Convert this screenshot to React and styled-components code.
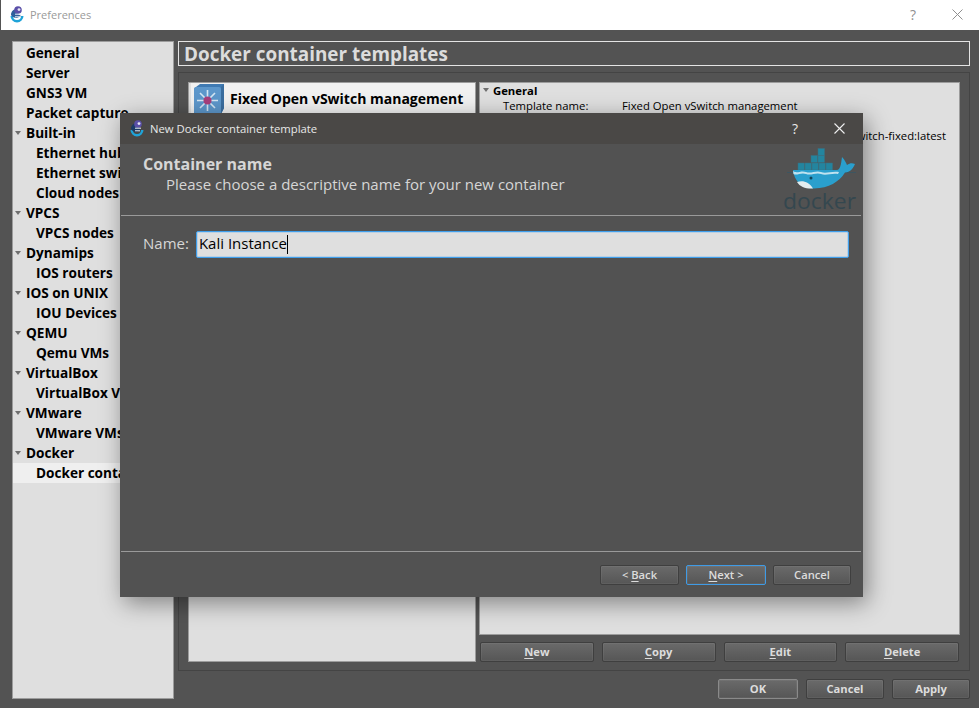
import React from 'react';
import styled, {createGlobalStyle} from 'styled-components';

const font = `"Open Sans", "Noto Sans", sans-serif`;

const Global = createGlobalStyle`
  html, body { margin: 0; padding: 0; background: #535353; }
  body { font-family: ${font}; overflow: hidden; }
  * { box-sizing: border-box; }
`;

const Window = styled.div`
  position: relative;
  width: 979px;
  height: 708px;
  background: #535353;
  display: flex;
  flex-flow: column;
  overflow: hidden;
`;

const TitleBar = styled.div`
  height: 30px;
  background: #fff;
  border-left: 1px solid #535353;
  display: flex;
  align-items: center;
  padding: 0 16px 2px 8px;
  color: #9a9a9a;
  font-size: 11px;
  gap: 5px;
`;

const TitleText = styled.span`
  flex: 1;
`;

const HelpMark = styled.span`
  color: ${p => p.$light ? '#e8e8e8' : '#8f8f8f'};
  font-size: 14px;
  width: 10px;
  text-align: center;
  margin-right: 29px;
`;

const Body = styled.div`
  flex: 1;
  display: flex;
  gap: 4px;
  padding: 11px 9px 9px 12px;
  min-height: 0;
`;

const Sidebar = styled.div`
  width: 162px;
  background: #dfdfdf;
  border: 1px solid #9c9c9c;
  padding-top: 1px;
  display: flex;
  flex-flow: column;
`;

const TreeRow = styled.div`
  height: 20px;
  line-height: 19px;
  font-size: 13.6px;
  font-weight: 700;
  color: #000;
  white-space: nowrap;
  overflow: hidden;
  padding-left: ${p => p.$sub ? 23 : 13}px;
  background: ${p => p.$selected ? '#efefef' : 'transparent'};
  position: relative;
`;

const Arrow = styled.i`
  position: absolute;
  left: ${p => p.$left || 2}px;
  top: ${p => p.$top || 8}px;
  width: 0;
  height: 0;
  border-left: 3.5px solid transparent;
  border-right: 3.5px solid transparent;
  border-top: 4px solid #6f6f6f;
`;

const Main = styled.div`
  flex: 1;
  display: flex;
  flex-flow: column;
  min-width: 0;
`;

const Heading = styled.div`
  height: 25px;
  border: 1px solid #e4e4e4;
  color: #dcdcdc;
  font-size: 18.9px;
  font-weight: 700;
  line-height: 25px;
  padding-left: 5px;
  white-space: nowrap;
`;

const Group = styled.div`
  margin-top: 6px;
  height: 599px;
  border: 1px solid #444;
  padding: 9px 9px 8px 9px;
  display: flex;
  gap: 3px;
`;

const TemplateList = styled.div`
  width: 288px;
  background: #dfdfdf;
  border: 1px solid #9c9c9c;
  padding: 0 0 0 2px;
`;

const TemplateRow = styled.div`
  height: 31px;
  background: #f1f1f1;
  display: flex;
  align-items: center;
  gap: 5px;
  padding-left: 2px;
  font-size: 14px;
  font-weight: 700;
  color: #000;
  white-space: nowrap;
`;

const RightColumn = styled.div`
  flex: 1;
  display: flex;
  flex-flow: column;
  gap: 7px;
`;

const InfoPanel = styled.div`
  height: 553px;
  background: #dfdfdf;
  border: 1px solid #9c9c9c;
  padding: 0 13px 0 4px;
  font-size: 11.3px;
  color: #000;
  position: relative;
`;

const InfoHead = styled.div`
  height: 15px;
  line-height: 15px;
  font-weight: 700;
  padding-left: 9px;
  position: relative;
`;

const InfoRow = styled.div`
  height: 15px;
  line-height: 15px;
  padding-left: 19px;
  display: grid;
  grid-template-columns: 119px 1fr;
  white-space: nowrap;
`;

const InfoValue = styled.span`
  justify-self: ${p => p.$end ? 'end' : 'start'};
`;

const ActionRow = styled.div`
  display: flex;
  gap: 8px;
  padding: 0 1px;
`;

const Button = styled.div`
  height: 20px;
  flex: ${p => p.$grow ? 1 : 'none'};
  width: ${p => p.$w ? p.$w + 'px' : 'auto'};
  border: 1px solid ${p => p.$focus ? '#3f9be6' : p.$default ? '#8a8a8a' : '#3f3f3f'};
  border-radius: 2px;
  background: linear-gradient(#6a6a6a, #565656);
  color: #dcdcdc;
  font-size: 11.2px;
  font-weight: ${p => p.$thin ? 600 : 700};
  line-height: 18px;
  text-align: center;
  box-shadow: inset 0 0 0 1px rgba(255,255,255,0.05);
  white-space: nowrap;

  u {
    text-underline-offset: 2px;
  }
`;

const BottomRow = styled.div`
  margin-top: 8px;
  display: flex;
  justify-content: flex-end;
  gap: 8px;
`;

const Dialog = styled.div`
  position: absolute;
  left: 120px;
  top: 113px;
  width: 743px;
  height: 484px;
  background: #525252;
  box-shadow: 4px 6px 22px rgba(0,0,0,0.42);
  display: flex;
  flex-flow: column;
`;

const DialogBar = styled.div`
  height: 31px;
  background: #4a4846;
  display: flex;
  align-items: center;
  gap: 5px;
  padding: 0 18px 1px 9px;
  color: #e8e8e8;
  font-size: 11.3px;
`;

const DialogHeader = styled.div`
  height: 72px;
  border-bottom: 1px solid #9a9a9a;
  margin: 0 2px 0 1px;
  padding: 10px 4px 0 22px;
  display: flex;
  justify-content: space-between;
  align-items: flex-start;
`;

const HeaderTitle = styled.div`
  font-size: 16px;
  line-height: 20px;
  font-weight: 700;
  color: #d6d6d6;
  white-space: nowrap;
`;

const HeaderSub = styled.div`
  font-size: 15px;
  line-height: 20px;
  color: #d6d6d6;
  padding-left: 23px;
  white-space: nowrap;
`;

const LogoBox = styled.div`
  margin-top: -6px;
  line-height: 0;
`;

const DialogContent = styled.div`
  flex: 1;
  padding: 15px 14px 0 23px;
  display: flex;
  align-items: flex-start;
  gap: 7px;
`;

const NameLabel = styled.label`
  font-size: 15px;
  line-height: 25px;
  color: #d6d6d6;
`;

const NameInput = styled.div`
  flex: 1;
  height: 27px;
  background: #dfdfdf;
  border: 1px solid #3f9fec;
  border-radius: 2px;
  box-shadow: inset 0 0 0 1px rgba(74,163,238,0.25);
  font-size: 15px;
  line-height: 23px;
  color: #000;
  padding-left: 2px;
  display: flex;
`;

const Caret = styled.span`
  width: 1px;
  height: 19px;
  margin: 3px 0 0 0;
  background: #000;
`;

const DialogFooter = styled.div`
  height: 46px;
  border-top: 1px solid #9a9a9a;
  margin: 0 2px 0 1px;
  padding: 13px 10px 0 0;
  display: flex;
  justify-content: flex-end;
  gap: 7px;
`;

// gns3 swirl, both the window and the dialog use it
const GnsIcon = ({dark}) => (
  <svg width="16" height="18" viewBox="0 0 16 18">
    <path d="M1.5 11 a6.5 6.5 0 0 0 13 0 L12 11 a4 4 0 0 1 -8 0z" fill="#1fa3d8" />
    <path d="M2 10 C2 6 5 4 8 4 L12 7 L9 9 L12 11 L8 13 C5 13 3 12 2 10z" fill={dark ? '#1b3a66' : '#2f5f9c'} />
    <circle cx="9" cy="5" r="3.8" fill="#5a4fa8" />
    <circle cx="10" cy="4.6" r="1.4" fill="#e8e8f4" />
    <path d="M6 9.2h6M6 11.8h5" stroke="#e6eef6" strokeWidth="1" />
  </svg>
);

const SwitchIcon = () => (
  <svg width="32" height="31" viewBox="0 0 32 31">
    <path d="M3 4 L7 1 H31 V25 L28 31 H1 V6z" fill="#3f7ab3" />
    <rect x="1" y="4" width="27" height="27" rx="2" fill="#5d97cb" />
    <path d="M28 4 L31 1 V25 L28 31z" fill="#3a6d9f" />
    <g stroke="#d5e6f3" strokeWidth="1.6">
      <path d="M14.5 17.5 L4 17.5M14.5 17.5 L25 17.5M14.5 17.5 L14.5 7M14.5 17.5 L14.5 28M14.5 17.5 L7 10M14.5 17.5 L22 10M14.5 17.5 L7 25M14.5 17.5 L22 25" />
    </g>
    <circle cx="14.5" cy="17.5" r="4" fill="#a83f7c" />
  </svg>
);

const DockerLogo = () => (
  <svg width="74" height="68" viewBox="0 0 74 68">
    <g fill="#23859f" stroke="#3a6f80" strokeWidth="0.5">
      <rect x="35" y="0.5" width="6.5" height="7" />
      <rect x="28" y="7.5" width="6.5" height="7" />
      <rect x="35" y="7.5" width="6.5" height="7" />
      <rect x="15" y="15" width="6.5" height="7" />
      <rect x="22" y="15" width="6.5" height="7" />
      <rect x="29" y="15" width="6.5" height="7" />
      <rect x="36" y="15" width="6.5" height="7" />
      <rect x="43" y="15" width="6.5" height="7" />
    </g>
    <path d="M4 24.5 H73" stroke="#3d5560" strokeWidth="1" />
    <path d="M10 22 H54 C57 22 58 17 59 9 C62 12 63 15 64 17 C67 15 69 15 72 16 C70 21 67 24 62 24.5 C56 34 46 40 31 40.5 C19 40.5 11 33 10 22z" fill="#2a9fcd" />
    <path d="M10 23 C14 26 18 22 23 24 C28 26 33 22 38 24 C43 26 48 23 56 24 L55 26 C48 25 43 28 38 26 C33 24 28 28 23 26 C18 24 14 28 10.5 26z" fill="#bfe2ef" />
    <path d="M14 34 C20 32 26 34 30 40.5 C23 41 17 39 14 34z" fill="#e3ecee" />
    <circle cx="28" cy="30" r="1.5" fill="#12465a" />
    <text x="0" y="61" fontFamily='"Open Sans", sans-serif' fontSize="21" fill="#34474f" textLength="73" lengthAdjust="spacingAndGlyphs">docker</text>
  </svg>
);

const tree = [
  ['General'],
  ['Server'],
  ['GNS3 VM'],
  ['Packet capture'],
  ['Built-in', 'open'],
  ['Ethernet hubs', 'sub'],
  ['Ethernet switches', 'sub'],
  ['Cloud nodes', 'sub'],
  ['VPCS', 'open'],
  ['VPCS nodes', 'sub'],
  ['Dynamips', 'open'],
  ['IOS routers', 'sub'],
  ['IOS on UNIX', 'open'],
  ['IOU Devices', 'sub'],
  ['QEMU', 'open'],
  ['Qemu VMs', 'sub'],
  ['VirtualBox', 'open'],
  ['VirtualBox VMs', 'sub'],
  ['VMware', 'open'],
  ['VMware VMs', 'sub'],
  ['Docker', 'open'],
  ['Docker containers', 'sel'],
];

const App = () => (
  <Window>
    <Global />
    <TitleBar>
      <GnsIcon />
      <TitleText>Preferences</TitleText>
      <HelpMark>?</HelpMark>
      <svg width="11" height="11" viewBox="0 0 11 11">
        <path d="M0.5 0.5 L10.5 10.5M10.5 0.5 L0.5 10.5" stroke="#8f8f8f" strokeWidth="1" />
      </svg>
    </TitleBar>
    <Body>
      <Sidebar>
        {tree.map(([name, kind]) => (
          <TreeRow key={name} $sub={kind === 'sub' || kind === 'sel'} $selected={kind === 'sel'}>
            {kind === 'open' ? <Arrow /> : null}
            {name}
          </TreeRow>
        ))}
      </Sidebar>
      <Main>
        <Heading>Docker container templates</Heading>
        <Group>
          <TemplateList>
            <TemplateRow>
              <SwitchIcon />
              Fixed Open vSwitch management
            </TemplateRow>
          </TemplateList>
          <RightColumn>
            <InfoPanel>
              <InfoHead><Arrow $left={-1} $top={5} />General</InfoHead>
              <InfoRow><span>Template name:</span><InfoValue>Fixed Open vSwitch management</InfoValue></InfoRow>
              <InfoRow><span>Template ID:</span><InfoValue></InfoValue></InfoRow>
              <InfoRow><span>Image name:</span><InfoValue $end>gns3/openvswitch-fixed:latest</InfoValue></InfoRow>
            </InfoPanel>
            <ActionRow>
              <Button $grow><u>N</u>ew</Button>
              <Button $grow><u>C</u>opy</Button>
              <Button $grow><u>E</u>dit</Button>
              <Button $grow><u>D</u>elete</Button>
            </ActionRow>
          </RightColumn>
        </Group>
        <BottomRow>
          <Button $w={80} $default>OK</Button>
          <Button $w={78}>Cancel</Button>
          <Button $w={78}>Apply</Button>
        </BottomRow>
      </Main>
    </Body>
    <Dialog>
      <DialogBar>
        <GnsIcon dark />
        <TitleText>New Docker container template</TitleText>
        <HelpMark $light>?</HelpMark>
        <svg width="11" height="11" viewBox="0 0 11 11">
          <path d="M0.5 0.5 L10.5 10.5M10.5 0.5 L0.5 10.5" stroke="#f0f0f0" strokeWidth="1.1" />
        </svg>
      </DialogBar>
      <DialogHeader>
        <div>
          <HeaderTitle>Container name</HeaderTitle>
          <HeaderSub>Please choose a descriptive name for your new container</HeaderSub>
        </div>
        <LogoBox><DockerLogo /></LogoBox>
      </DialogHeader>
      <DialogContent>
        <NameLabel>Name:</NameLabel>
        <NameInput>Kali Instance<Caret /></NameInput>
      </DialogContent>
      <DialogFooter>
        <Button $w={79} $thin>&lt; <u>B</u>ack</Button>
        <Button $w={80} $thin $focus><u>N</u>ext &gt;</Button>
        <Button $w={78} $thin>Cancel</Button>
      </DialogFooter>
    </Dialog>
  </Window>
);

export default App;
